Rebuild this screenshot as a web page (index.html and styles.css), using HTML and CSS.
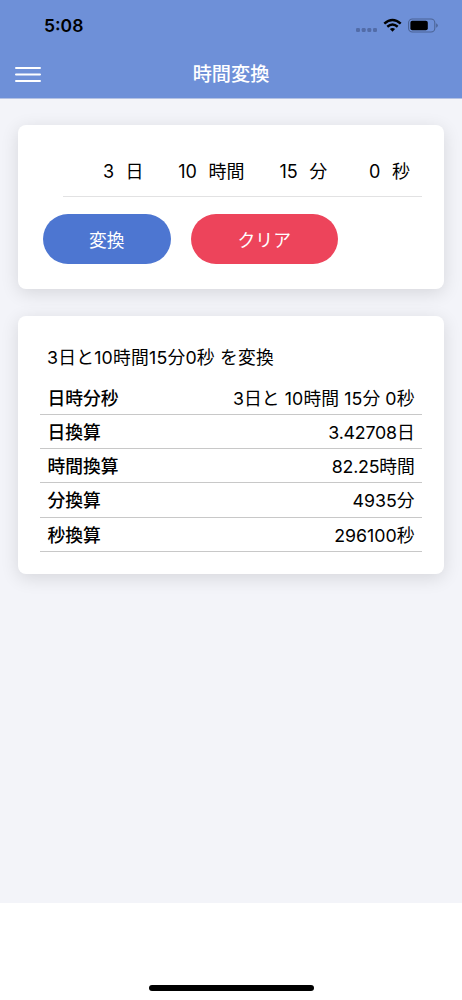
FILE: index.html
```html
<!DOCTYPE html>
<html lang="ja">
<head>
<meta charset="utf-8">
<meta name="viewport" content="width=device-width, initial-scale=1">
<title>時間変換</title>
<link rel="stylesheet" href="styles.css">
</head>
<body>
<header class="header">
  <div class="status">
    <span class="clock">5:08</span>
    <svg class="status-icons" width="84" height="18" viewBox="0 0 84 18">
      <g fill="#526ca8"><rect x="1" y="11" width="4" height="4" rx="1.3"/><rect x="6.7" y="11" width="4" height="4" rx="1.3"/><rect x="12.3" y="11" width="4" height="4" rx="1.3"/><rect x="18" y="11" width="4" height="4" rx="1.3"/></g>
      <g fill="none" stroke="#000" stroke-width="2.5"><path d="M29.3 6.6Q37.5-.6 45.7 6.6"/><path d="M32.3 9.7Q37.5 5.3 42.7 9.7"/></g>
      <path d="M34.9 12Q37.5 9.9 40.1 12L37.5 14.8Z"/>
      <rect x="53.6" y="2" width="26.2" height="13" rx="3.8" fill="none" stroke="#4b6395" stroke-width="1.1"/>
      <rect x="55.4" y="3.8" width="17.4" height="9.4" rx="2"/>
      <path d="M81.2 6.3Q82.8 7 82.8 8.5T81.2 10.7Z" fill="#4b6395"/>
    </svg>
  </div>
  <div class="navbar">
    <svg class="menu" width="28" height="18" viewBox="0 0 28 18" stroke="#fff" stroke-width="2" stroke-linecap="round"><path d="M2 2.9H26M2 9.4H26M2 15.9H26"/></svg>
    <h1 class="title">時間変換</h1>
  </div>
</header>
<main class="content">
  <section class="card form">
    <div class="fields">
      <span class="num">3</span><span class="unit">日</span>
      <span class="num">10</span><span class="unit">時間</span>
      <span class="num">15</span><span class="unit">分</span>
      <span class="num">0</span><span class="unit">秒</span>
    </div>
    <div class="actions">
      <button class="btn convert">変換</button>
      <button class="btn clear">クリア</button>
    </div>
  </section>
  <section class="card result">
    <p class="summary">3日と10時間15分0秒 を変換</p>
    <dl class="rows">
      <div class="row"><dt>日時分秒</dt><dd class="wide">3日と 10時間 15分 0秒</dd></div>
      <div class="row"><dt>日換算</dt><dd class="decimal">3.42708日</dd></div>
      <div class="row"><dt>時間換算</dt><dd class="decimal">82.25時間</dd></div>
      <div class="row"><dt>分換算</dt><dd>4935分</dd></div>
      <div class="row"><dt>秒換算</dt><dd>296100秒</dd></div>
    </dl>
  </section>
</main>
<footer class="footer"><div class="home-indicator"></div></footer>
</body>
</html>
```
FILE: styles.css
```css
* { box-sizing: border-box; margin: 0; padding: 0; }
body {
  height: 1000px;
  display: flex;
  flex-direction: column;
  overflow: hidden;
  background: #fff;
  color: #000;
  font-family: Inter, "Noto Sans CJK JP", sans-serif;
  font-size: 17.8px;
}
.header { height: 98.5px; background: #6e90d8; border-bottom: 1px solid #b4c2e4; }
.status { height: 50px; padding: 2px 23px 0 44px; display: flex; justify-content: space-between; align-items: center; }
.clock { font-size: 17.5px; font-weight: 600; line-height: 20px; }
.navbar { height: 48px; padding: 0 14px; display: grid; grid-template-columns: 28px 1fr 28px; align-items: center; }
.title { color: #fff; font-size: 19.2px; font-weight: 500; line-height: 28px; text-align: center; }
.content { height: 804px; padding: 26.5px 18px 0; background: #f3f4f9; }
.card { background: #fff; border-radius: 8px; box-shadow: 0 4px 18px rgba(0, 0, 0, .12); }
.form { height: 164px; padding: 22px 22px 0 24.5px; }
.fields { height: 50px; margin-left: 20.5px; padding-right: 12px; border-bottom: 1px solid #e2e2e3; display: flex; justify-content: flex-end; align-items: center; line-height: 26px; font-size: 18px; white-space: nowrap; }
.num { flex: 0 0 53px; text-align: right; letter-spacing: -.2px; }
.unit { flex: none; margin-left: 11.8px; }
.actions { display: flex; gap: 20px; margin-top: 17px; }
.btn { height: 50px; border: 0; border-radius: 25px; color: #fff; font: inherit; }
.convert { width: 128.5px; background: #4d76d1; }
.clear { width: 146.5px; background: #ed445b; }
.result { height: 258px; margin-top: 27px; padding: 28px 22px 0; }
.summary { padding-left: 7px; line-height: 27px; letter-spacing: .2px; }
.rows { margin-top: 9.8px; }
.row { height: 34.2px; padding: 3px 7.5px 0; border-bottom: 1.5px solid #c8c8c8; display: flex; justify-content: space-between; align-items: center; line-height: 26px; }
.row dt { font-weight: 500; }
.wide { letter-spacing: .08px; }
.decimal { letter-spacing: -.2px; }
.footer { flex: 1; display: flex; justify-content: center; align-items: flex-end; padding-bottom: 9px; }
.home-indicator { width: 165px; height: 6px; border-radius: 3px; background: #000; }
```
